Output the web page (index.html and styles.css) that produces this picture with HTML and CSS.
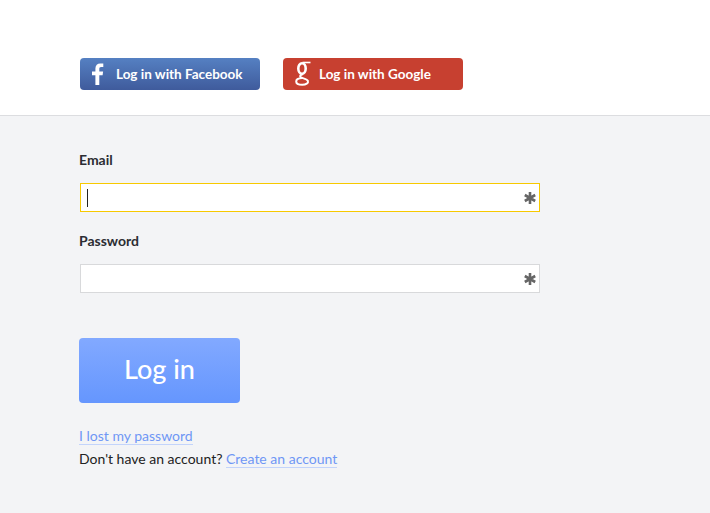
FILE: index.html
```html
<!DOCTYPE html>
<html lang="en">
<head>
    <meta charset="UTF-8">
    <meta name="viewport" content="width=device-width, initial-scale=1.0">
    <title>Log in</title>
    <link rel="stylesheet" href="styles.css">
</head>
<body>

    <div class="social">
        <a class="social-btn facebook" href="#">
            <svg class="fb-icon" width="12" height="22" viewBox="0 0 12 22"><path d="M3.4 22V12.2H0V8.4h3.4V5.6C3.4 2.1 5.4.4 8.3.4c1.4 0 2.6.1 3 .2v3.4H9.2c-1.6 0-1.9.8-1.9 1.9v2.5h3.8l-.5 3.8H7.3V22z" fill="#fff"/></svg>
            <span>Log in with Facebook</span>
        </a>
        <a class="social-btn google" href="#">
            <svg class="g-icon" width="16" height="25" viewBox="0 0 16 25" fill="none" stroke="#fff"><ellipse cx="7" cy="7.500" rx="3.700" ry="5.200" stroke-width="2.600"/><path d="M15.500 1.500H7.500" stroke-width="1.600"/><path d="M8 13c-2 .6-3 1.400-2.800 2.600.3 1.600 6.800 2 7.700 4.200.8 2.300-2 4-5.600 4S1.200 22.400 1.200 20.500c0-2 2.500-3.200 6-3.400" stroke-width="2"/></svg>
            <span>Log in with Google</span>
        </a>
    </div>

    <form class="login">
        <label class="field-label">Email</label>
        <div class="field focused">
            <span class="caret"></span>
            <svg class="star" width="12" height="12" viewBox="0 0 12 12"><path d="M6 0v12M.8 3l10.400 6M.8 9l10.400-6" stroke="#666" stroke-width="2.600"/></svg>
        </div>
        <label class="field-label">Password</label>
        <div class="field">
            <svg class="star" width="12" height="12" viewBox="0 0 12 12"><path d="M6 0v12M.8 3l10.400 6M.8 9l10.400-6" stroke="#666" stroke-width="2.600"/></svg>
        </div>
        <button class="submit" type="button">Log in</button>
        <p class="links"><a href="#">I lost my password</a></p>
        <p class="links">Don't have an account? <a href="#">Create an account</a></p>
    </form>

</body>
</html>
```

FILE: styles.css
```css
* {
    margin: 0;
    padding: 0;
    box-sizing: border-box;
}
body {
    font-family: 'Lato', 'Noto Sans', sans-serif;
    background: #f3f4f6;
    color: #222;
    height: 513px;
    overflow: hidden;
}
.social {
    display: flex;
    gap: 23px;
    height: 116px;
    padding: 58px 0 0 80px;
    background: #fff;
    border-bottom: 1px solid #dcdde0;
}
.social-btn {
    display: flex;
    align-items: center;
    width: 180px;
    height: 32px;
    padding-bottom: 1px;
    border-radius: 4px;
    color: #fff;
    font-size: 13.500px;
    font-weight: 700;
    text-decoration: none;
}
.facebook {
    background: linear-gradient(#5580c2, #3f5b9c);
}
.fb-icon {
    margin: 0 12px 0 12px;
}
.google {
    background: #c74030;
}
.g-icon {
    margin: 0 8px 0 12px;
}
.login {
    padding: 35px 0 0 79px;
}
.field-label {
    display: block;
    height: 20px;
    font-size: 14px;
    font-weight: 700;
    line-height: 18px;
    color: #2b2d33;
}
.field {
    display: flex;
    align-items: center;
    width: 460px;
    height: 29px;
    margin: 12px 0 20px 1px;
    padding: 1px 3px 0 6px;
    background: #fff;
    border: 1px solid #d8d9db;
}
.field.focused {
    border-color: #f7c900;
}
.caret {
    width: 1px;
    height: 18px;
    background: #222;
}
.star {
    margin-left: auto;
}
.submit {
    display: block;
    width: 161px;
    height: 65px;
    margin-top: 45px;
    margin-bottom: 23px;
    padding-bottom: 4px;
    border: none;
    border-radius: 4px;
    background: linear-gradient(#82a9ff, #6596fe);
    color: #fff;
    font-family: inherit;
    font-size: 27px;
    font-weight: 500;
}
.links {
    height: 23px;
    font-size: 14px;
    line-height: 19px;
}
.links a {
    color: #6f97f5;
    text-decoration: none;
    border-bottom: 1px solid #c3d4fb;
}
```
